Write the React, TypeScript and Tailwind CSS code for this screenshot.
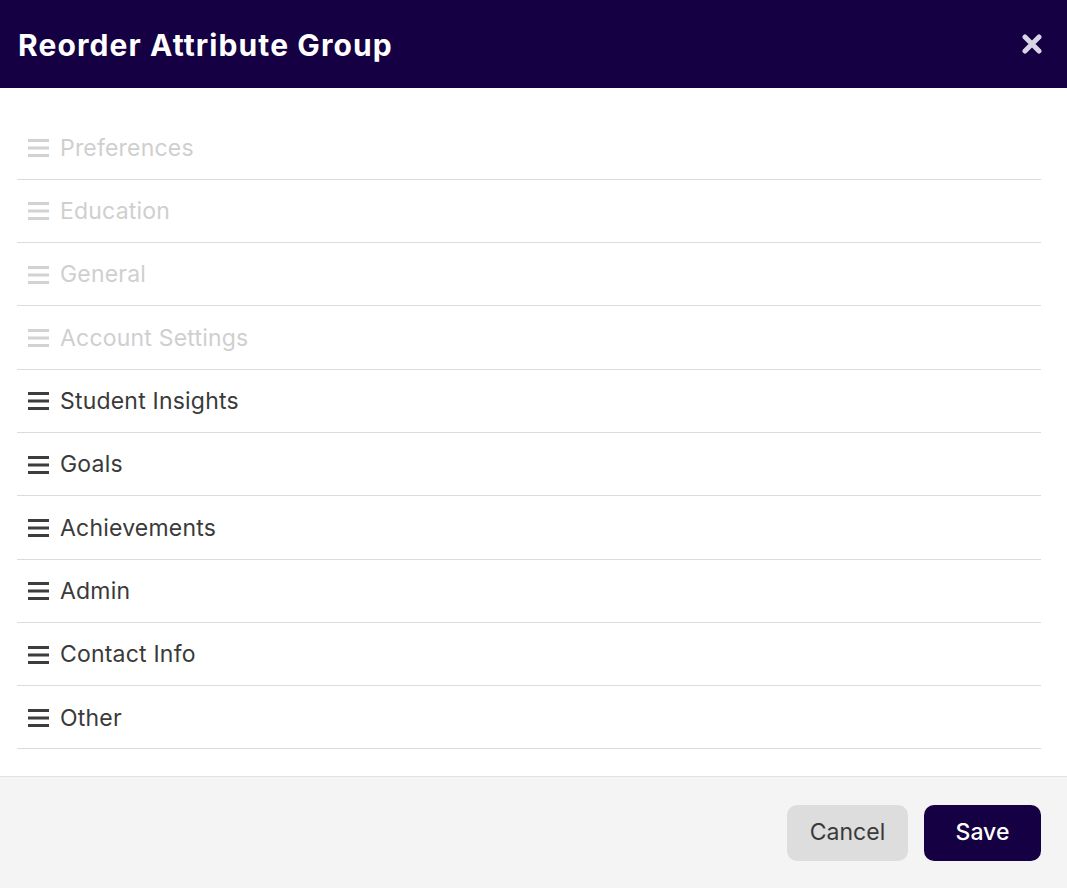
import * as React from 'react';

const groups = [
  { name: 'Preferences', locked: true },
  { name: 'Education', locked: true },
  { name: 'General', locked: true },
  { name: 'Account Settings', locked: true },
  { name: 'Student Insights', locked: false },
  { name: 'Goals', locked: false },
  { name: 'Achievements', locked: false },
  { name: 'Admin', locked: false },
  { name: 'Contact Info', locked: false },
  { name: 'Other', locked: false },
];

function DragHandle({ faded }: { faded: boolean }) {
  return (
    <svg width="21" height="19" viewBox="0 0 21 19" className={faded ? 'text-[#d2d2d2]' : 'text-[#3d3d3d]'}>
      <rect x="0" y="1" width="21" height="3" fill="currentColor" />
      <rect x="0" y="8.5" width="21" height="3" fill="currentColor" />
      <rect x="0" y="16" width="21" height="3" fill="currentColor" />
    </svg>
  );
}

export default function App() {
  return (
    <div className="flex h-[888px] w-[1067px] flex-col bg-white font-['Inter',sans-serif]">
      {/* Header */}
      <div className="flex h-[88px] shrink-0 items-center justify-between bg-[#140042] pl-[18px] pr-[25px]">
        <h1 className="pt-[2px] text-[30px] font-bold tracking-[1.1px] text-white">Reorder Attribute Group</h1>
        <button className="flex h-5 w-5 items-center justify-center text-[#d9d5e6]">
          <svg width="20" height="20" viewBox="0 0 20 20" fill="none" stroke="currentColor" strokeWidth="5" strokeLinecap="round">
            <path d="M3 3l14 14M17 3L3 17" />
          </svg>
        </button>
      </div>

      {/* List */}
      <div className="flex-1 pl-[17px] pr-[26px] pt-[28.5px]">
        {groups.map((g) => (
          <div
            key={g.name}
            className="flex h-[63.3px] items-center gap-[11px] border-b border-[#dcdcdc] pl-[11px]"
          >
            <DragHandle faded={g.locked} />
            <span className={`pt-[1px] text-[23px] tracking-[0.2px] ${g.locked ? 'text-[#cfcfcf]' : 'text-[#3a3a3a]'}`}>
              {g.name}
            </span>
          </div>
        ))}
      </div>

      {/* Footer */}
      <div className="flex h-[112px] shrink-0 items-center justify-end gap-4 border-t border-[#e2e2e2] bg-[#f4f4f4] pr-[26px]">
        <button className="h-[56px] w-[121px] rounded-[10px] bg-[#dddddd] text-[23px] text-[#3a3a3a]">Cancel</button>
        <button className="h-[56px] w-[117px] rounded-[10px] bg-[#140042] text-[23px] font-medium text-white">Save</button>
      </div>
    </div>
  );
}
